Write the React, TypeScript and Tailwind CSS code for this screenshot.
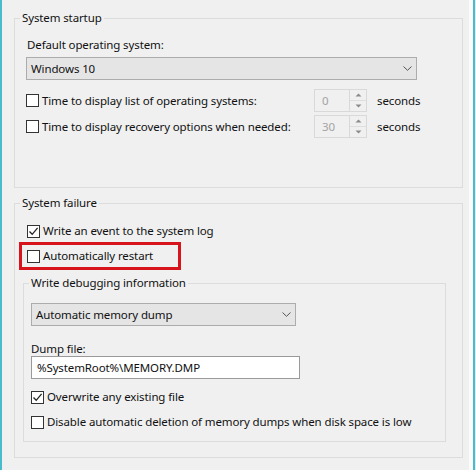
import React from "react";

function Box({ checked }: { checked?: boolean }) {
  return (
    <span className="flex h-[13px] w-[13px] shrink-0 items-center justify-center border border-[#333333] bg-white">
      {checked && (
        <svg width="11" height="11" viewBox="0 0 11 11">
          <path d="M1.5 5.5 L4.2 8.3 L9.6 1.8" stroke="#222222" strokeWidth="1.3" fill="none" />
        </svg>
      )}
    </span>
  );
}

function Check({ label, checked }: { label: string; checked?: boolean }) {
  return (
    <div className="flex h-[16px] items-center gap-[3px]">
      <Box checked={checked} />
      <span className="whitespace-nowrap">{label}</span>
    </div>
  );
}

function Chevron() {
  return (
    <svg width="9" height="5" viewBox="0 0 9 5">
      <path d="M0.5 0.5 L4.5 4.3 L8.5 0.5" stroke="#555555" strokeWidth="1" fill="none" />
    </svg>
  );
}

function Spinner({ value }: { value: string }) {
  return (
    <div className="flex h-[23px] w-[53px]">
      <div className="flex flex-1 items-center border border-[#d9d9d9] pl-[7px] text-[#a3a3a3]">{value}</div>
      <div className="flex w-[17px] flex-col border border-l-0 border-[#d9d9d9] bg-[#f0f0f0]">
        <div className="flex flex-1 items-center justify-center border-b border-[#dedede]">
          <svg width="7" height="4" viewBox="0 0 7 4">
            <path d="M0.5 3.5 L3.5 0.5 L6.5 3.5 Z" fill="#8a8a8a" />
          </svg>
        </div>
        <div className="flex flex-1 items-center justify-center">
          <svg width="7" height="4" viewBox="0 0 7 4">
            <path d="M0.5 0.5 L3.5 3.5 L6.5 0.5 Z" fill="#8a8a8a" />
          </svg>
        </div>
      </div>
    </div>
  );
}

export default function App() {
  return (
    <div className="flex h-[470px] w-[476px] bg-[#f0f0f0] font-['Noto_Sans',sans-serif] text-[11.5px] leading-[16px] tracking-[-0.12px] text-[#111111]">
      <div className="w-[2px] bg-[#49bccb]" />
      <div className="flex w-[467px] flex-col pl-[12px]">
        {/* System startup */}
        <fieldset className="mt-[10px] h-[178px] w-[449px] border border-[#dcdcdc]">
          <legend className="ml-[5px] px-[2px]">System startup</legend>
          <div className="flex flex-col pl-[11px] pt-[11px]">
            <div className="pl-[1px]">Default operating system:</div>
            <div className="mt-[4px] flex h-[23px] w-[391px] items-center justify-between border border-[#acacac] bg-[#e5e5e5] pl-[4px] pr-[4px]">
              <span>Windows 10</span>
              <Chevron />
            </div>
            <div className="mt-[9px] flex flex-col gap-[3px]">
              <div className="grid h-[23px] grid-cols-[278px_53px_auto] items-center gap-x-[10px]">
                <Check label="Time to display list of operating systems:" />
                <Spinner value="0" />
                <span>seconds</span>
              </div>
              <div className="grid h-[23px] grid-cols-[278px_53px_auto] items-center gap-x-[10px]">
                <Check label="Time to display recovery options when needed:" />
                <Spinner value="30" />
                <span>seconds</span>
              </div>
            </div>
          </div>
        </fieldset>

        {/* System failure */}
        <fieldset className="mt-[7px] h-[263px] w-[449px] border border-[#dcdcdc]">
          <legend className="ml-[5px] px-[2px]">System failure</legend>
          <div className="flex flex-col pt-[12px]">
            <div className="pl-[12px]">
              <Check label="Write an event to the system log" checked />
            </div>
            <div className="ml-[4px] mt-[3px] flex h-[28px] w-[162px] items-center border-[3px] border-[#d7141b] pl-[5px]">
              <Check label="Automatically restart" />
            </div>
            <fieldset className="ml-[8px] mt-[5px] h-[167px] w-[423px] border border-[#dcdcdc]">
              <legend className="ml-[5px] px-[2px]">Write debugging information</legend>
              <div className="flex flex-col pl-[7px] pt-[12px]">
                <div className="flex h-[23px] w-[265px] items-center justify-between border border-[#acacac] bg-[#e5e5e5] pl-[4px] pr-[4px]">
                  <span>Automatic memory dump</span>
                  <Chevron />
                </div>
                <div className="mt-[15px] leading-[15px]">Dump file:</div>
                <div className="flex h-[23px] w-[269px] items-center border border-[#9a9a9a] bg-white pl-[5px]">
                  %SystemRoot%\MEMORY.DMP
                </div>
                <div className="mt-[10px] flex flex-col gap-[9px]">
                  <Check label="Overwrite any existing file" checked />
                  <Check label="Disable automatic deletion of memory dumps when disk space is low" />
                </div>
              </div>
            </fieldset>
          </div>
        </fieldset>
      </div>
      <div className="w-[4px] bg-[#fbfbfb]" />
      <div className="w-[2px] bg-[#49bccb]" />
      <div className="w-[1px] bg-[#e8e8e8]" />
    </div>
  );
}
